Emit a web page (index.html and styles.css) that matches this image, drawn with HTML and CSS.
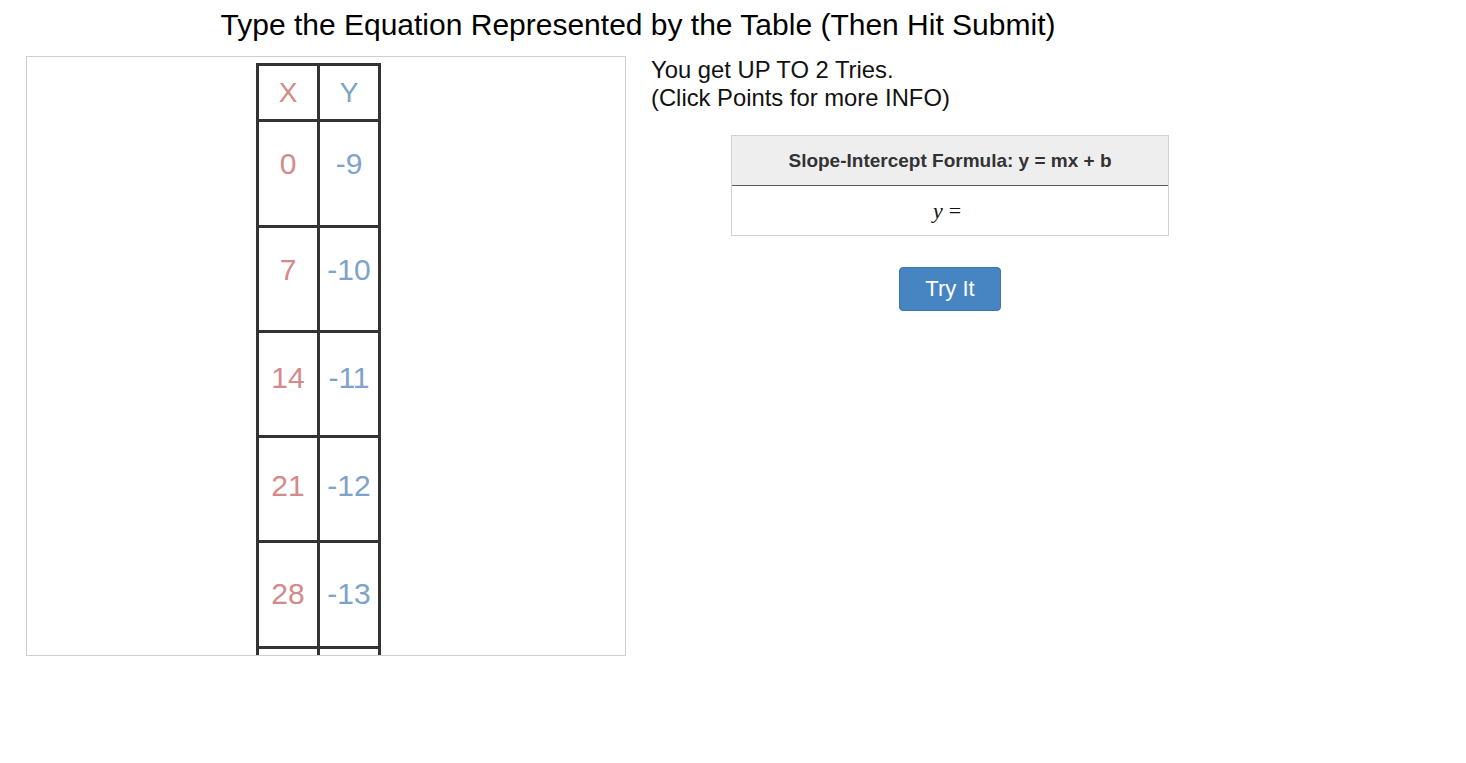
FILE: index.html
```html
<!DOCTYPE html>
<html>
<head>
<meta charset="utf-8">
<link rel="stylesheet" href="styles.css">
</head>
<body>
<div class="page">
  <h1 class="title">Type the Equation Represented by the Table (Then Hit Submit)</h1>
  <div class="main">
    <div class="board">
      <div class="grid">
        <div class="cell head x">X</div><div class="cell head y">Y</div>
        <div class="cell num x r1">0</div><div class="cell num y r1">-9</div>
        <div class="cell num x r2">7</div><div class="cell num y r2">-10</div>
        <div class="cell num x r3">14</div><div class="cell num y r3">-11</div>
        <div class="cell num x r4">21</div><div class="cell num y r4">-12</div>
        <div class="cell num x r5">28</div><div class="cell num y r5">-13</div>
        <div class="cell num x"></div><div class="cell num y"></div>
      </div>
    </div>
    <div class="side">
      <p class="info">You get UP TO 2 Tries.<br>(Click Points for more INFO)</p>
      <div class="panel">
        <div class="panel-head">Slope-Intercept Formula: y = mx + b</div>
        <div class="panel-body"><span class="math"><span class="mi">y</span><span class="mo">=</span></span></div>
      </div>
      <div class="actions"><button class="btn">Try It</button></div>
    </div>
  </div>
</div>
</body>
</html>
```
FILE: styles.css
```css
html, body {
  margin: 0;
  padding: 0;
  background: #fff;
}
body {
  font-family: "Liberation Sans", Arial, sans-serif;
  color: #000;
}
.page {
  width: 1276px;
}
.title {
  font-size: 30px;
  font-weight: normal;
  line-height: 36px;
  text-align: center;
  margin: 7px 0 13px;
}
.main {
  display: flex;
  align-items: flex-start;
  padding-left: 26px;
}
.board {
  width: 600px;
  height: 600px;
  box-sizing: border-box;
  border: 1px solid #cfcfcf;
  overflow: hidden;
  padding: 6px 0 0 229px;
}
.grid {
  display: grid;
  grid-template-columns: 61px 61px;
  grid-template-rows: 56px 106px 105px 105px 105px 106px 105px;
  width: 122px;
  border-top: 3px solid #333;
  border-left: 3px solid #333;
}
.cell {
  box-sizing: border-box;
  border-right: 3px solid #333;
  border-bottom: 3px solid #333;
  text-align: center;
}
.head {
  font-size: 28px;
  display: flex;
  align-items: center;
  justify-content: center;
}
.num {
  font-size: 30px;
  line-height: 30px;
}
.x { color: #d4898a; }
.y { color: #7ea3c9; }
.r1 { padding-top: 27px; }
.r2 { padding-top: 27px; }
.r3 { padding-top: 30px; }
.r4 { padding-top: 33px; }
.r5 { padding-top: 36px; }
.side {
  margin-left: 25px;
  width: 598px;
}
.info {
  margin: 0;
  font-size: 23.8px;
  line-height: 28px;
  color: #111;
}
.panel {
  width: 438px;
  margin: 23px auto 0;
  box-sizing: border-box;
  border: 1px solid #d2d2d2;
}
.panel-head {
  height: 49px;
  background: #eeeeee;
  border-bottom: 1px solid #5a5a5a;
  display: flex;
  align-items: center;
  justify-content: center;
  font-weight: bold;
  font-size: 19px;
  color: #333;
}
.panel-body {
  height: 49px;
  display: flex;
  align-items: center;
  justify-content: center;
  background: #fff;
}
.math {
  font-family: "Liberation Serif", "Times New Roman", serif;
  font-size: 22px;
  color: #111;
  padding-right: 6px;
}
.mi { font-style: italic; }
.mo { margin-left: 6px; }
.actions {
  display: flex;
  justify-content: center;
  margin-top: 31px;
}
.btn {
  width: 102px;
  height: 44px;
  box-sizing: border-box;
  background: #4785c2;
  border: 1px solid #3d75ad;
  border-radius: 4px;
  color: #fff;
  font-family: "Liberation Sans", Arial, sans-serif;
  font-size: 22px;
  padding: 0;
  cursor: pointer;
}
```
